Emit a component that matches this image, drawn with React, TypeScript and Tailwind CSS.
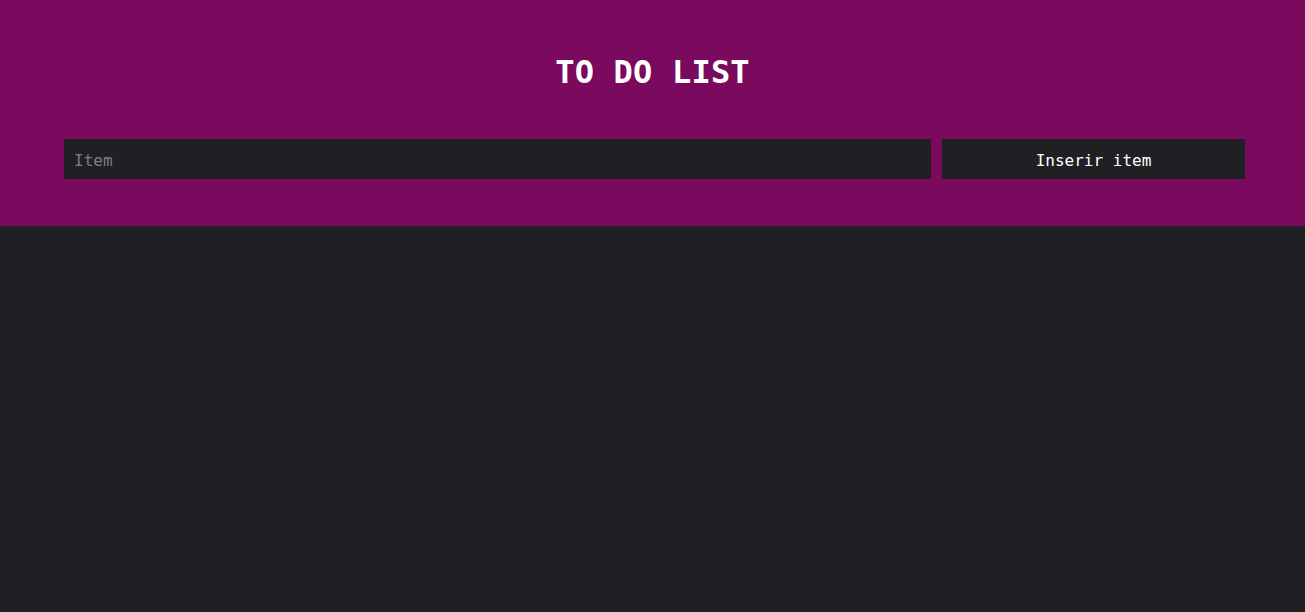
export default function App() {
  return (
    <main className="min-h-screen bg-[#202024] font-['DejaVu_Sans_Mono',monospace] text-white">
      <header className="h-[226px] bg-[#7a0a5e] pt-[48px]">
        <h1 className="text-center text-[32px] font-bold leading-[48px] tracking-[0.2px]">TO DO LIST</h1>
        <form className="mt-[43px] ml-[64px] mr-[60px] flex gap-[11px]" onSubmit={(e) => e.preventDefault()}>
          <input
            type="text"
            placeholder="Item"
            className="h-[40px] flex-1 bg-[#202024] px-[10px] pt-[3px] text-base text-white outline-none placeholder:text-[#7c7c8a]"
          />
          <button type="submit" className="h-[40px] w-[303px] bg-[#202024] pt-[3px] text-base font-medium text-white">
            Inserir item
          </button>
        </form>
      </header>
    </main>
  );
}
